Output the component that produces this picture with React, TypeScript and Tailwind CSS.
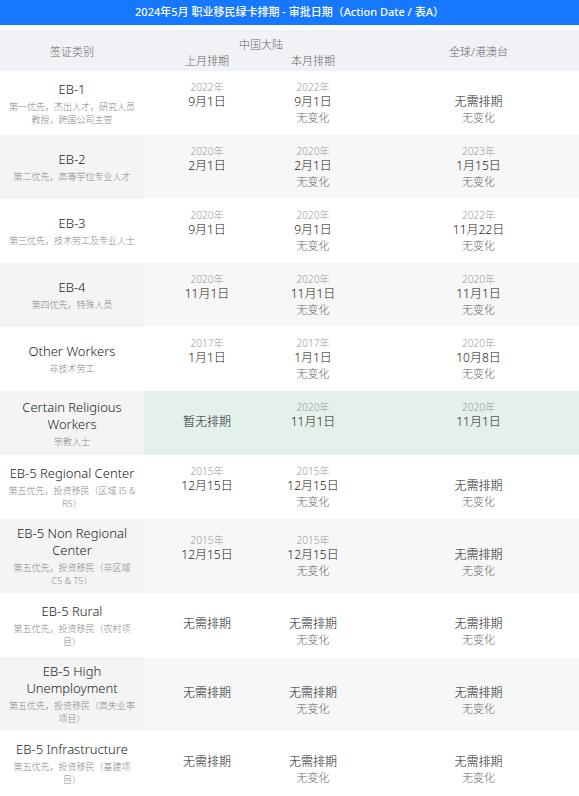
import React from 'react';

type Cell = { year?: string; date: string; change?: string };

type Row = {
  title: string[];
  sub: string[];
  prev: Cell;
  cur: Cell;
  global: Cell;
  highlight?: boolean;
};

const NONE: Cell = { date: '无需排期', change: '无变化' };

const rows: Row[] = [
  {
    title: ['EB-1'],
    sub: ['第一优先，杰出人才，研究人员', '教授，跨国公司主管'],
    prev: { year: '2022年', date: '9月1日' },
    cur: { year: '2022年', date: '9月1日', change: '无变化' },
    global: NONE,
  },
  {
    title: ['EB-2'],
    sub: ['第二优先，高等学位专业人才'],
    prev: { year: '2020年', date: '2月1日' },
    cur: { year: '2020年', date: '2月1日', change: '无变化' },
    global: { year: '2023年', date: '1月15日', change: '无变化' },
  },
  {
    title: ['EB-3'],
    sub: ['第三优先，技术劳工及专业人士'],
    prev: { year: '2020年', date: '9月1日' },
    cur: { year: '2020年', date: '9月1日', change: '无变化' },
    global: { year: '2022年', date: '11月22日', change: '无变化' },
  },
  {
    title: ['EB-4'],
    sub: ['第四优先，特殊人员'],
    prev: { year: '2020年', date: '11月1日' },
    cur: { year: '2020年', date: '11月1日', change: '无变化' },
    global: { year: '2020年', date: '11月1日', change: '无变化' },
  },
  {
    title: ['Other Workers'],
    sub: ['非技术劳工'],
    prev: { year: '2017年', date: '1月1日' },
    cur: { year: '2017年', date: '1月1日', change: '无变化' },
    global: { year: '2020年', date: '10月8日', change: '无变化' },
  },
  {
    title: ['Certain Religious', 'Workers'],
    sub: ['宗教人士'],
    prev: { date: '暂无排期' },
    cur: { year: '2020年', date: '11月1日' },
    global: { year: '2020年', date: '11月1日' },
    highlight: true,
  },
  {
    title: ['EB-5 Regional Center'],
    sub: ['第五优先，投资移民（区域 I5 &', 'R5）'],
    prev: { year: '2015年', date: '12月15日' },
    cur: { year: '2015年', date: '12月15日', change: '无变化' },
    global: NONE,
  },
  {
    title: ['EB-5 Non Regional', 'Center'],
    sub: ['第五优先，投资移民（非区域', 'C5 & T5）'],
    prev: { year: '2015年', date: '12月15日' },
    cur: { year: '2015年', date: '12月15日', change: '无变化' },
    global: NONE,
  },
  {
    title: ['EB-5 Rural'],
    sub: ['第五优先，投资移民（农村项', '目）'],
    prev: { date: '无需排期' },
    cur: NONE,
    global: NONE,
  },
  {
    title: ['EB-5 High', 'Unemployment'],
    sub: ['第五优先，投资移民（高失业率', '项目）'],
    prev: { date: '无需排期' },
    cur: NONE,
    global: NONE,
  },
  {
    title: ['EB-5 Infrastructure'],
    sub: ['第五优先，投资移民（基建项', '目）'],
    prev: { date: '无需排期' },
    cur: NONE,
    global: NONE,
  },
];

function DateCell({ cell, className = '' }: { cell: Cell; className?: string }) {
  return (
    <div className={`flex flex-col items-center justify-center text-center ${className}`}>
      <div className="h-[13px] text-[10px] leading-[13px] text-[#999]">{cell.year ?? ''}</div>
      <div className="h-[16px] text-[12px] leading-[16px] text-[#222]">{cell.date}</div>
      <div className="h-[16px] text-[11px] leading-[16px] text-[#666]">{cell.change ?? ''}</div>
    </div>
  );
}

export default function App() {
  return (
    <div className="w-[579px] overflow-hidden bg-white font-['Noto_Sans','Noto_Sans_CJK_SC',sans-serif] font-light">
      <div className="flex h-[25px] items-center justify-center bg-[#1677ff] text-[11px] font-medium text-white">
        2024年5月 职业移民绿卡排期 - 审批日期（Action Date / 表A）
      </div>

      <div className="mt-[5px] grid h-[41px] grid-cols-[144px_126px_108px_1fr] grid-rows-[auto_auto] content-center bg-[#f0f2f5] pt-[4px] text-[11px] text-[#666]">
        <div className="row-span-2 flex items-center justify-center">签证类别</div>
        <div className="col-span-2 text-center leading-[16px]">中国大陆</div>
        <div className="row-span-2 flex items-center justify-center">全球/港澳台</div>
        <div className="text-center leading-[16px]">上月排期</div>
        <div className="pr-[22px] text-center leading-[16px]">本月排期</div>
      </div>

      {rows.map((row, i) => {
        const even = i % 2 === 1;
        const labelBg = even ? 'bg-[#f4f4f4]' : 'bg-white';
        const dataBg = row.highlight ? 'bg-[#e4f1eb]' : even ? 'bg-[#f7f7f7]' : 'bg-white';
        return (
          <div key={i} className="grid min-h-[64px] grid-cols-[144px_126px_108px_1fr]">
            <div className={`flex flex-col items-center justify-center px-[6px] py-[6px] text-center ${labelBg}`}>
              {row.title.map((t) => (
                <div key={t} className="text-[13px] leading-[17px] text-[#222]">
                  {t}
                </div>
              ))}
              <div className="mt-[2px]">
                {row.sub.map((s) => (
                  <div key={s} className="text-[9px] leading-[13px] text-[#888]">
                    {s}
                  </div>
                ))}
              </div>
            </div>
            <DateCell cell={row.prev} className={dataBg} />
            <DateCell cell={row.cur} className={`pr-[22px] ${dataBg}`} />
            <DateCell cell={row.global} className={dataBg} />
          </div>
        );
      })}
    </div>
  );
}
